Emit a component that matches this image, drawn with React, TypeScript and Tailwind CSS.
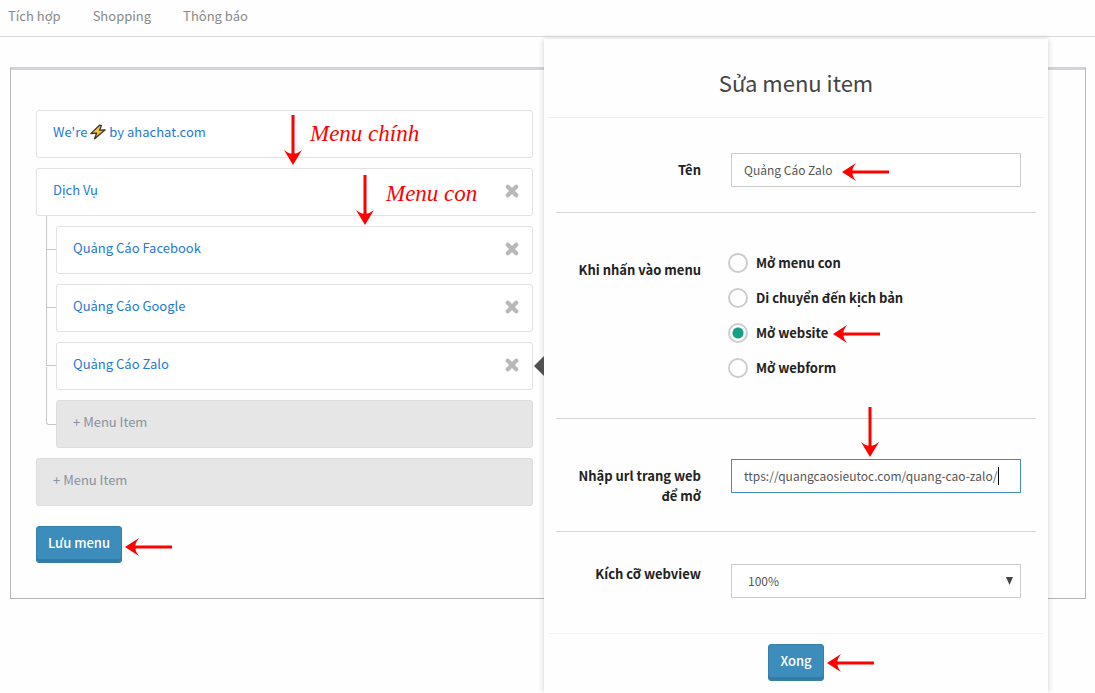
import { useState } from "react";
import type { ReactNode } from "react";
import clsx from "clsx";

function Arrow({ direction, className }: { direction: "left" | "down"; className: string }) {
  return direction === "left" ? (
    <svg aria-hidden="true" viewBox="0 0 47 20" className={clsx("pointer-events-none absolute h-5 w-[47px]", className)}>
      <path d="M0 10 L14 1 C11 5 10.500 7 10.500 8.500 H47 V11.500 H10.500 C10.500 13 11 15 14 19 Z" fill="#f00" />
    </svg>
  ) : (
    <svg aria-hidden="true" viewBox="0 0 20 50" className={clsx("pointer-events-none absolute h-[50px] w-5", className)}>
      <path d="M10 50 L1 35 C5 38 7 38.500 8.500 38.500 V0 H11.500 V38.500 C13 38.500 15 38 19 35 Z" fill="#f00" />
    </svg>
  );
}

function Bolt() {
  return (
    <svg role="img" aria-label="bolt" viewBox="0 0 16 16" className="mx-[3px] inline-block size-4 align-[-3px]">
      <path
        d="M9.500 1.200 L.8 9.600 L6.600 9.200 L4.600 14.800 L15.200 5.800 L9.600 6.200 L11.400 1.600 Z"
        fill="#fdc02f"
        stroke="#38332d"
        strokeWidth="1.300"
        strokeLinejoin="round"
      />
    </svg>
  );
}

function RemoveButton({ label }: { label: string }) {
  return (
    <button type="button" aria-label={`Xóa ${label}`} className="ml-auto">
      <svg viewBox="0 0 14 14" className="size-[14px]">
        <path d="M2.800 2.800 L11.200 11.200 M11.200 2.800 L2.800 11.200" stroke="#b8b8b8" strokeWidth="4.200" strokeLinecap="round" />
      </svg>
    </button>
  );
}

function MenuCard({ children, label, removable }: { children?: ReactNode; label: string; removable?: boolean }) {
  return (
    <div className="relative flex h-12 items-center rounded-[3px] border border-[#e2e2e2] bg-white pr-[13px] pb-[2px] pl-4">
      <a href="#" className="-mt-[2px] leading-5 text-[#2479d3]">
        {label === "We're" ? (
          <>
            We're
            <Bolt />
            by ahachat.com
          </>
        ) : (
          label
        )}
      </a>
      {removable && <RemoveButton label={label} />}
      {children}
    </div>
  );
}

function AddItem() {
  return (
    <button
      type="button"
      className="flex h-12 w-full items-start rounded-[3px] border border-[#dcdcdc] bg-[#e6e6e6] px-4 pt-[11px] leading-5 text-[#8592a3]"
    >
      + Menu Item
    </button>
  );
}

const primary =
  "h-[37px] rounded-[3px] border border-[#367fa9] bg-[#3c8dbc] px-[11px] pb-[3px] font-medium text-white shadow-[inset_0_-3px_0_#357ca5]";
const annotation =
  "pointer-events-none absolute font-['Liberation_Serif',serif] text-[23px] leading-6 whitespace-nowrap text-[#f00] italic";
const field = "h-[34px] w-full border bg-white pb-px text-[12px] text-[#555] outline-none";

function FormRow({ label, htmlFor, className, labelClass, last, children }: {
  label: string;
  htmlFor?: string;
  className: string;
  labelClass: string;
  last?: boolean;
  children: ReactNode;
}) {
  return (
    <div className={clsx("flex items-start gap-[30px] pr-[15px]", !last && "border-b border-[#d6d6d6]", className)}>
      <label id={`${htmlFor}-label`} htmlFor={htmlFor} className={clsx("w-[145px] shrink-0 pl-5 text-right leading-5 font-bold", labelClass)}>
        {label}
      </label>
      <div className="relative min-w-0 flex-1">{children}</div>
    </div>
  );
}

const actions = ["Mở menu con", "Di chuyển đến kịch bản", "Mở website", "Mở webform"];
const subItems = ["Quảng Cáo Facebook", "Quảng Cáo Google", "Quảng Cáo Zalo"];

export default function App() {
  const [action, setAction] = useState("Mở website");
  const branch = "relative before:absolute before:-left-[10px] before:w-[10px] before:border-b before:border-l before:border-[#c8c8c8]";
  return (
    <div className="relative min-h-screen overflow-hidden bg-[#fefefe] font-['Noto_Sans_CJK_SC','Noto_Sans',sans-serif] text-[13px] text-[#222]">
      <nav className="flex h-[37px] gap-8 border-b border-[#d8d8dc] px-2 pt-[6px] leading-5 text-[#888]">
        <a href="#">Tích hợp</a>
        <a href="#">Shopping</a>
        <a href="#">Thông báo</a>
      </nav>

      <main className="mx-[10px] mt-[30px] mr-[9px] border border-t-[3px] border-[#b4b4b6] border-t-[#d2d4dc] px-[25px] pt-10 pb-[35px]">
        <div className="flex max-w-[497px] flex-col gap-[10px]">
          <MenuCard label="We're">
            <Arrow direction="down" className="top-1 left-[246px]" />
            <span className={clsx(annotation, "top-[11px] left-[273px]")}>Menu chính</span>
          </MenuCard>
          <MenuCard label="Dịch Vụ" removable>
            <Arrow direction="down" className="top-[6px] left-[318px] z-10" />
            <span className={clsx(annotation, "top-[13px] left-[349px]")}>Menu con</span>
          </MenuCard>
          <ul className="ml-5 flex flex-col gap-[10px]">
            {subItems.map((name, i) => (
              <li
                key={name}
                className={clsx(branch, i === 0 ? "before:-top-[10px] before:h-[34px]" : "before:-top-[34px] before:h-[58px]")}
              >
                <MenuCard label={name} removable />
              </li>
            ))}
            <li className={clsx(branch, "before:-top-[33px] before:h-[58px] before:rounded-bl-[3px]")}>
              <AddItem />
            </li>
          </ul>
          <AddItem />
        </div>
        <div className="relative mt-5 inline-block">
          <button type="button" className={primary}>Lưu menu</button>
          <Arrow direction="left" className="top-[11px] left-full ml-[3px]" />
        </div>
      </main>

      <aside className="absolute top-[39px] right-[47px] bottom-0 w-[504px] bg-[#fefefe] shadow-[0_0_6px_rgba(0,0,0,0.18)]">
        <svg aria-hidden="true" viewBox="0 0 10 20" className="absolute top-[317px] -left-[10px] h-5 w-[10px]">
          <path d="M10 0 V20 L0 10 Z" fill="#505050" />
        </svg>
        <h2 className="mx-1 border-b border-[#eee] pt-[27px] pb-[19px] text-center text-[22px] leading-8 text-[#444]">Sửa menu item</h2>
        <form className="px-3" onSubmit={(e) => e.preventDefault()}>
          <FormRow label="Tên" htmlFor="name" className="pt-[35px] pb-[25px]" labelClass="pt-[7px]">
            <input id="name" defaultValue="Quảng Cáo Zalo" className={clsx(field, "border-[#ccc] px-3")} />
            <Arrow direction="left" className="top-[9px] left-[111px]" />
          </FormRow>
          <FormRow label="Khi nhấn vào menu" htmlFor="action-0" className="pt-8 pb-[33px]" labelClass="pt-[15px]">
            <div role="radiogroup" aria-labelledby="action-0-label" className="-ml-[3px]">
              {actions.map((name, i) => (
                <div key={name} className="relative flex h-[35px] items-center gap-2">
                  <input
                    type="radio"
                    id={`action-${i}`}
                    name="action"
                    checked={action === name}
                    onChange={() => setAction(name)}
                    className="size-5 appearance-none rounded-full border-2 border-[#ccc] bg-white checked:bg-[radial-gradient(circle,#16a085_5px,#fff_6px)]"
                  />
                  <label htmlFor={`action-${i}`} className="leading-5 font-bold">{name}</label>
                  {name === "Mở website" && <Arrow direction="left" className="top-[9px] left-[105px]" />}
                </div>
              ))}
            </div>
          </FormRow>
          <FormRow label="Nhập url trang web để mở" htmlFor="url" className="pt-10 pb-[25px]" labelClass="pt-[7px]">
            <input
              id="url"
              defaultValue="ttps://quangcaosieutoc.com/quang-cao-zalo/"
              className={clsx(field, "border-[#3c8dbc] px-3")}
            />
            <span aria-hidden="true" className="absolute top-2 right-[22px] h-[18px] w-px bg-black" />
            <Arrow direction="down" className="-top-[52px] left-[129px]" />
          </FormRow>
          <FormRow label="Kích cỡ webview" htmlFor="size" className="pt-8 pb-[35px]" labelClass="pt-0" last>
            <select id="size" className={clsx(field, "appearance-none border-[#ccc] px-4")}>
              <option>100%</option>
            </select>
            <svg aria-hidden="true" viewBox="0 0 8 8" className="pointer-events-none absolute top-[13px] right-2 size-2">
              <path d="M1 0 H8 L4.500 8 Z" fill="#444" />
            </svg>
          </FormRow>
        </form>
        <footer className="mx-1 flex justify-center border-t border-[#f3f3f3] pt-[10px]">
          <div className="relative">
            <button type="button" className={primary}>Xong</button>
            <Arrow direction="left" className="top-[9px] left-full ml-[3px]" />
          </div>
        </footer>
      </aside>
    </div>
  );
}
